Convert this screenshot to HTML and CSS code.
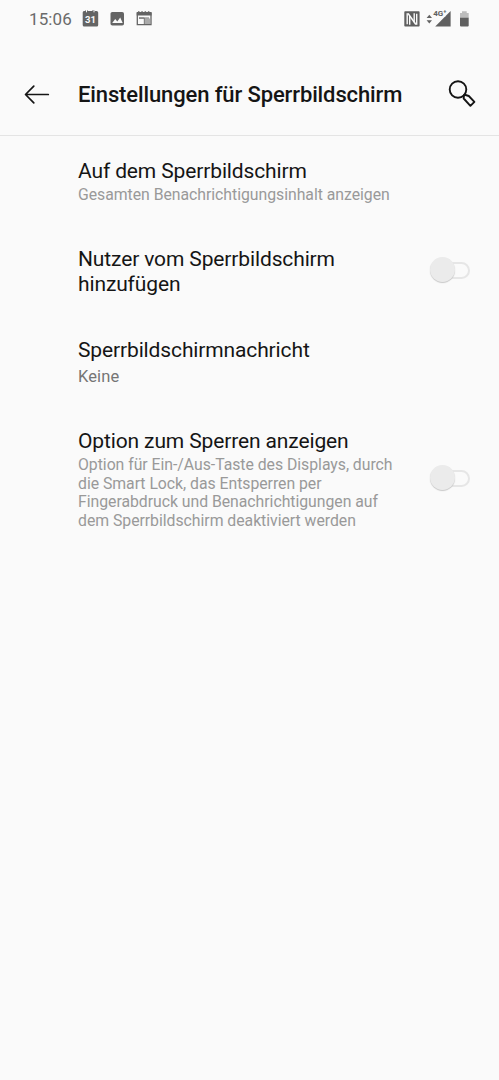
FILE: index.html
```html
<!DOCTYPE html>
<html lang="de">
<head>
<meta charset="utf-8">
<title>Einstellungen für Sperrbildschirm</title>
<link rel="stylesheet" href="styles.css">
</head>
<body>
<div class="statusbar">
  <span class="clock">15:06</span>
  <svg class="notifications" width="72" height="20" viewBox="0 0 72 20">
    <path fill="#646464" d="M2 2h1.500v-1h2v1h5v-1h2v1h2q1.700 0 1.700 1.500v12.500q0 1.500-1.500 1.500H2.200q-1.500 0-1.500-1.500V3.500Q.7 2 2 2z"/>
    <path stroke="#fafafa" stroke-width="1" d="M4.500 1v2.300M12 1v2.300"/>
    <text class="calendar-day" x="8.400" y="13.700" text-anchor="middle">31</text>
    <rect fill="#646464" x="28.500" y="3" width="13.500" height="13.500" rx="1.800"/>
    <path fill="#fafafa" d="M30.200 14l3-4 2.100 2.500 2.900-3.900 2.500 5.400z"/>
    <path fill="none" stroke="#646464" stroke-width="1.300" d="M55.300 4.500h13.700v11.200H55.300z"/>
    <path fill="#646464" d="M54.700 3h1.300v-.8h1.500V3h1.800v-.8h1.500V3h1.800v-.8h1.500V3h1.800v-.8h1.500V3h2.200v3.500H54.700z"/>
    <path fill="#777" d="M57 8.500h5.300v1.200H57z"/>
    <path fill="#aaa" d="M62.300 9.500H68V15h-5.700z"/>
    <path fill="none" stroke="#777" d="M57 9h10M62.300 9v6"/>
  </svg>
  <svg class="system-icons" width="68" height="20" viewBox="0 0 68 20">
    <rect fill="#5f5f5f" x=".3" y="2.300" width="15.300" height="15.300" rx=".8"/>
    <path fill="none" stroke="#fafafa" stroke-width="1.400" d="M3.200 4.300v11M12.700 4.700v11M5.700 15.800V7M10.200 13V4.200"/>
    <path fill="none" stroke="#fafafa" stroke-width="1.600" d="M4 4.400L11.900 15.500"/>
    <path fill="#626262" d="M22.600 9l2.700-3.300L28 9zM22.600 11.200H28l-2.700 3.300z"/>
    <path fill="#606060" d="M46.600 2v15.400H31.200z"/>
    <path fill="#fafafa" d="M29 1h12.300v6.700H29z"/>
    <text class="network" x="29.200" y="7.200">4G⁺</text>
    <path fill="#bdbdbd" d="M56 4.100h2V2.300h4.700v1.800h2v5H56z"/>
    <path fill="#606060" d="M56 8.800h8.700v7.600q0 1-1 1H57q-1 0-1-1z"/>
  </svg>
</div>
<header class="appbar">
  <svg class="back" width="26" height="22" viewBox="0 0 26 22" fill="none" stroke="#151515" stroke-width="1.700" stroke-linecap="round" stroke-linejoin="round"><path d="M24.300 10.500H1.700M9.800 2.200L1.500 10.500l8.300 8.300"/></svg>
  <h1 class="heading">Einstellungen für Sperrbildschirm</h1>
  <svg class="search" width="30" height="30" viewBox="0 0 30 30" fill="none" stroke="#151515" stroke-width="1.900" stroke-linejoin="round"><circle cx="10" cy="9.500" r="8.300"/><path d="M16 15l-.3 3.500 6.700 7.300 4-4-5.600-5.800-3.200-1z"/></svg>
</header>
<main>
  <section class="row row-notifications">
    <div class="copy"><h2 class="title">Auf dem Sperrbildschirm</h2>
    <p class="summary">Gesamten Benachrichtigungsinhalt anzeigen</p></div>
  </section>
  <section class="row row-users">
    <div class="copy"><h2 class="title">Nutzer vom Sperrbildschirm<br>hinzufügen</h2></div>
    <span class="switch"><span class="thumb"></span></span>
  </section>
  <section class="row row-message">
    <div class="copy"><h2 class="title">Sperrbildschirmnachricht</h2>
    <p class="summary summary-value">Keine</p></div>
  </section>
  <section class="row row-lockdown">
    <div class="copy"><h2 class="title">Option zum Sperren anzeigen</h2>
    <p class="summary">Option für Ein-/Aus-Taste des Displays, durch<br>die Smart Lock, das Entsperren per<br>Fingerabdruck und Benachrichtigungen auf<br>dem Sperrbildschirm deaktiviert werden</p></div>
    <span class="switch"><span class="thumb"></span></span>
  </section>
</main>
</body>
</html>
```
FILE: styles.css
```css
*, *::before { box-sizing: border-box; }
body {
  margin: 0;
  min-height: 1080px;
  background: #fafafa;
  color: #151515;
  font-family: Roboto, "Liberation Sans", sans-serif;
}
h1, h2, p { margin: 0; font-weight: 400; }
svg { display: block; flex: none; }
.statusbar {
  display: flex;
  align-items: center;
  height: 38px;
  padding: 0 27px 0 29px;
  color: #6a6a6a;
}
.clock { width: 53px; font-size: 17px; line-height: 20px; letter-spacing: .1px; white-space: nowrap; }
.calendar-day { font: 700 9.500px Roboto, sans-serif; fill: #fafafa; }
.network { font: 700 8px Roboto, sans-serif; fill: #606060; }
.system-icons { margin-left: auto; }
.appbar {
  display: flex;
  align-items: center;
  height: 98px;
  padding: 16px 21px 0 24px;
  border-bottom: 1px solid #e4e4e4;
}
.heading {
  margin-left: 28px;
  font-size: 22px;
  font-weight: 500;
  line-height: 26px;
  letter-spacing: -.12px;
  white-space: nowrap;
}
.search { margin-left: auto; }
.row {
  display: flex;
  justify-content: space-between;
  align-items: center;
  padding: 0 28px 0 78px;
}
.row-notifications { margin-top: 23px; }
.row-users { margin-top: 42px; }
.row-message { margin-top: 42px; }
.row-lockdown { margin-top: 43px; }
.copy { white-space: nowrap; }
.title { font-size: 21px; line-height: 24.500px; letter-spacing: -.13px; }
.summary { margin-top: 2.500px; margin-bottom: .5px; font-size: 15.800px; line-height: 18.500px; letter-spacing: -.03px; color: #999; }
.summary-value { margin-top: 5px; margin-bottom: 0; font-size: 16.500px; letter-spacing: .1px; color: #757575; }
.switch {
  display: flex;
  justify-content: flex-end;
  align-items: center;
  position: relative;
  width: 42px;
  height: 28px;
}
.row-users .switch, .row-lockdown .switch { margin-top: -3px; }
.switch::before {
  content: "";
  width: 34px;
  height: 17px;
  margin-right: 1px;
  border: 2px solid #e6e6e6;
  border-radius: 9px;
}
.thumb {
  position: absolute;
  left: 1px;
  top: 1px;
  width: 25px;
  height: 25px;
  border-radius: 50%;
  background: #ebebeb;
  box-shadow: 0 1px 1px #c8c8c8;
}
```
